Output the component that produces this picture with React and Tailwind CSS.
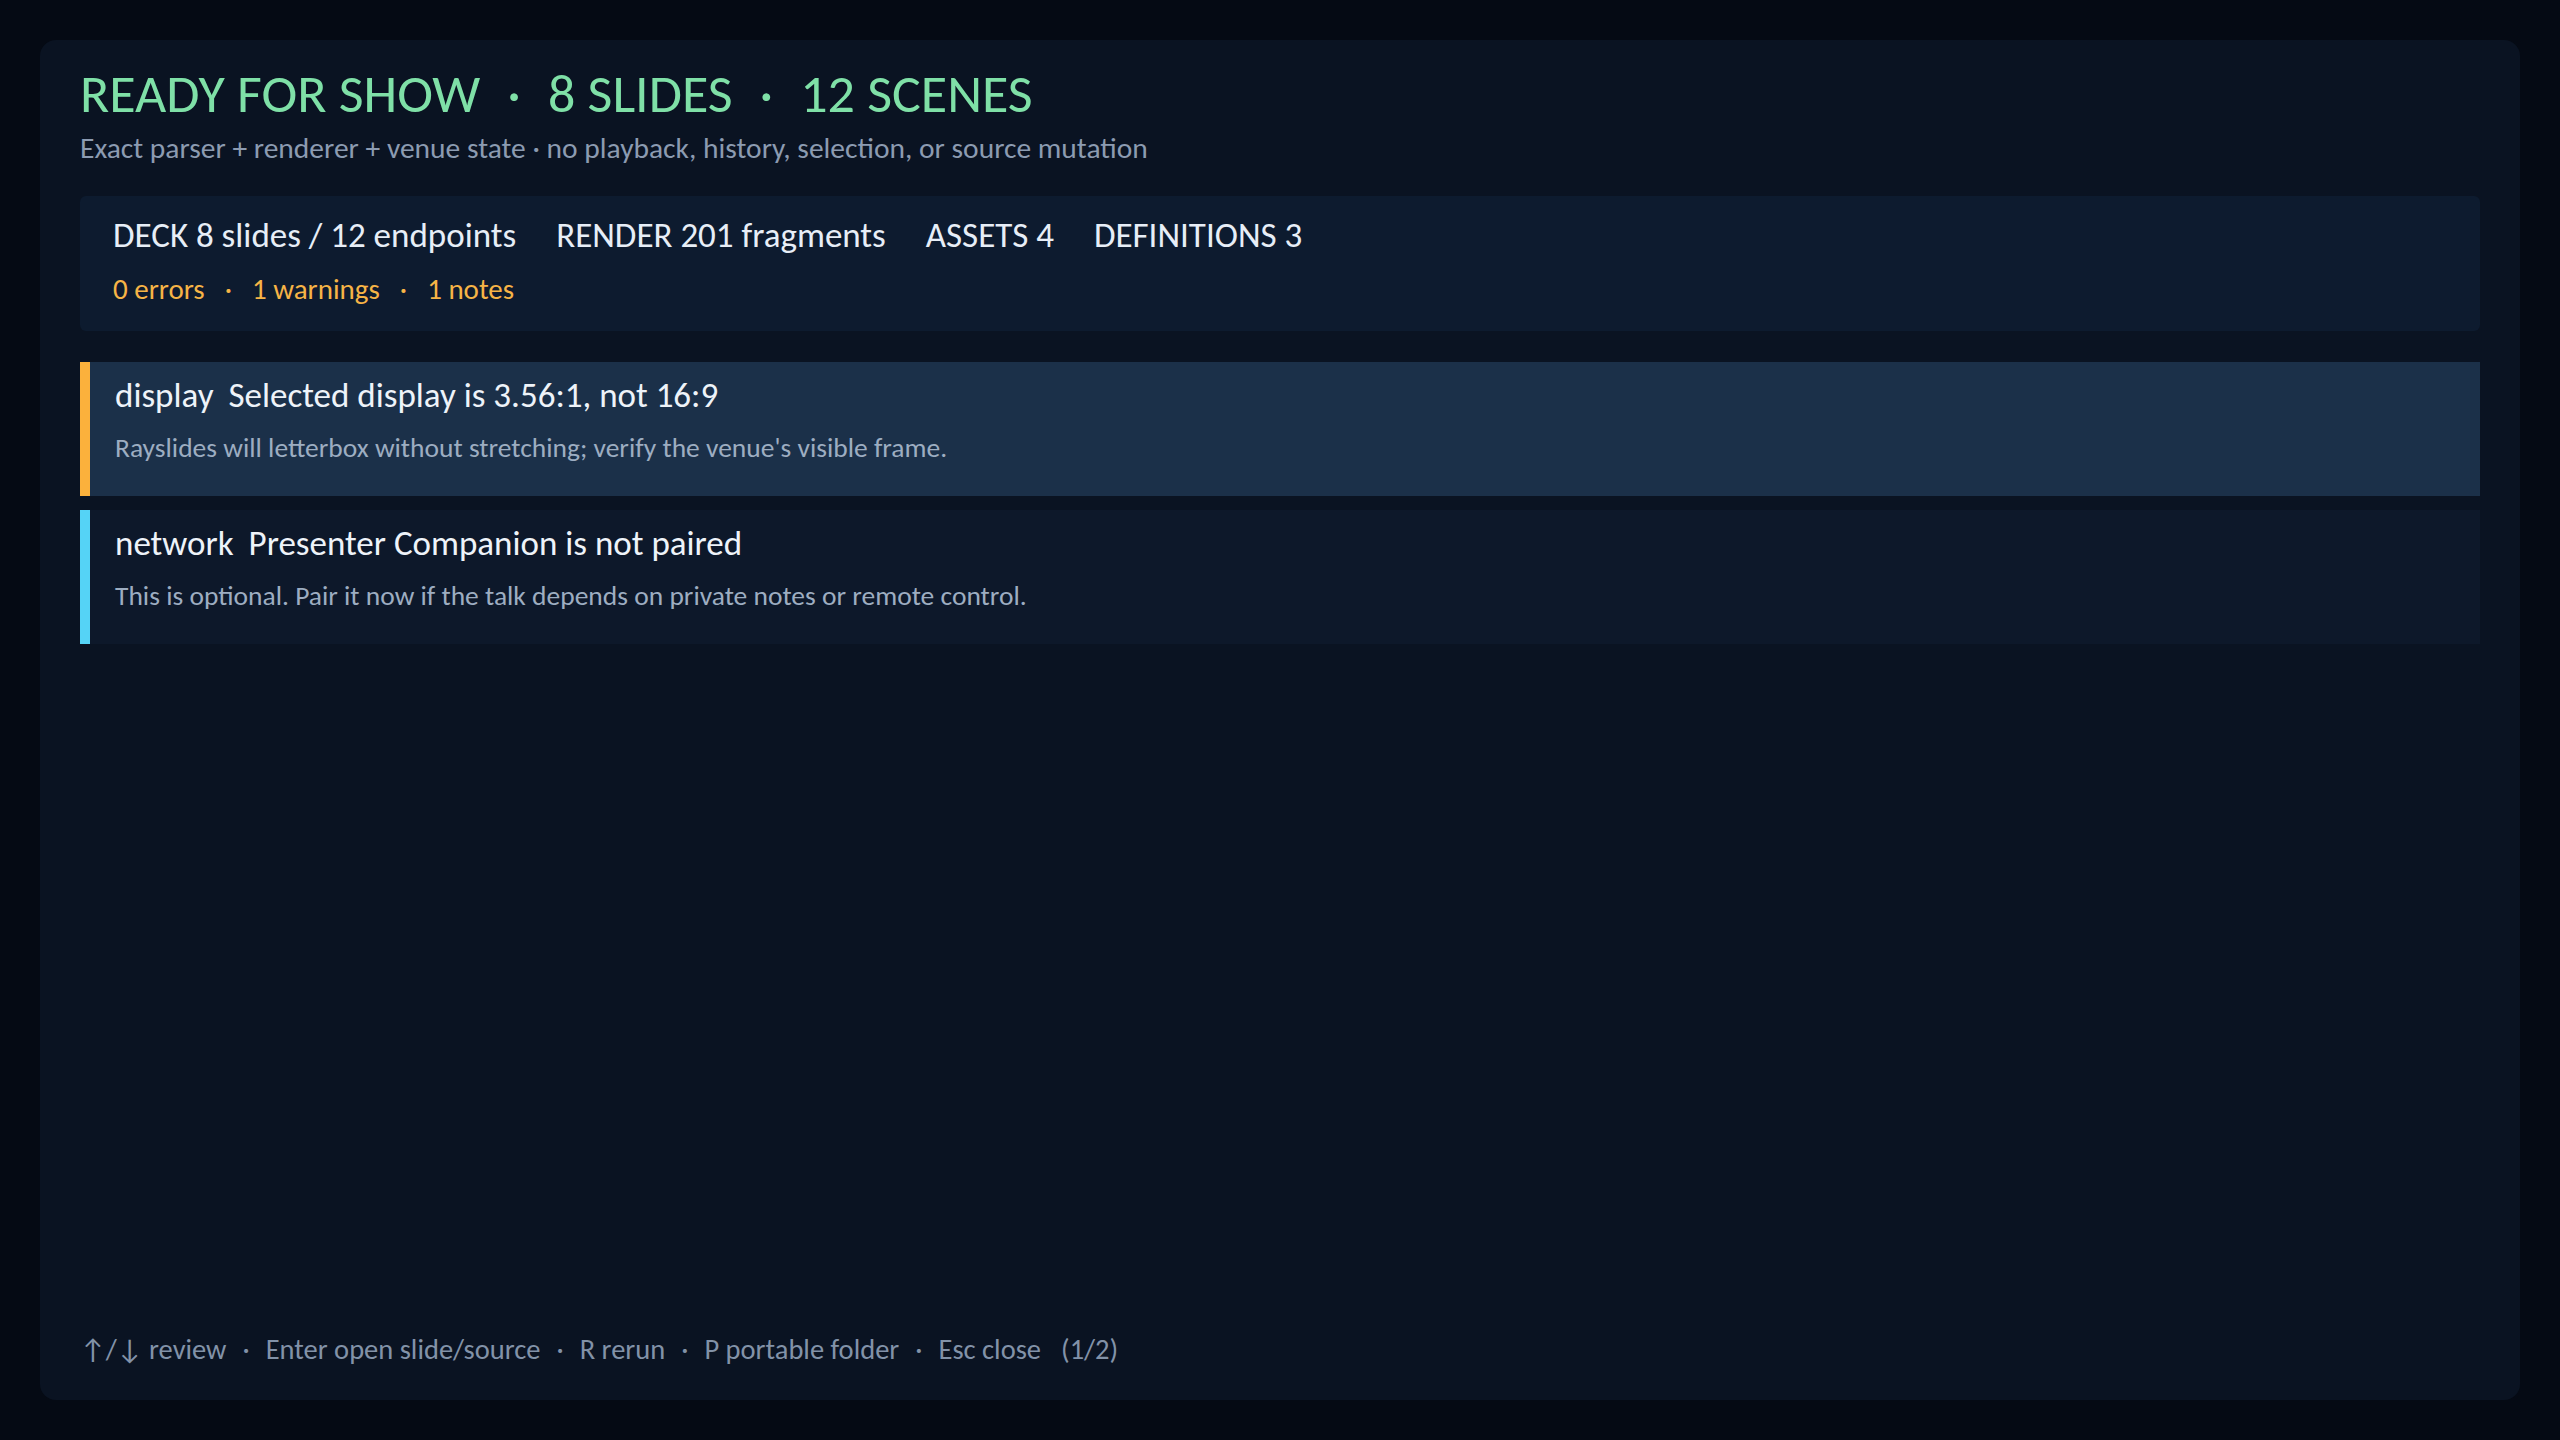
import React from "react";

const issues = [
  {
    key: "display",
    tag: "display",
    title: "Selected display is 3.56:1, not 16:9",
    detail: "Rayslides will letterbox without stretching; verify the venue's visible frame.",
    bar: "bg-[#fbb13c]",
    bg: "bg-[#1b3049]",
  },
  {
    key: "network",
    tag: "network",
    title: "Presenter Companion is not paired",
    detail: "This is optional. Pair it now if the talk depends on private notes or remote control.",
    bar: "bg-[#55d3f6]",
    bg: "bg-[#0d182a]",
  },
];

const Dot = ({ className }) => <span className={className}>·</span>;

const App = () => {
  return (
    <div
      className="w-full h-screen bg-[#050a14] p-[40px] flex"
      style={{ fontFamily: "Carlito, Calibri, Lato, sans-serif" }}
    >
      <div className="flex-1 flex flex-col bg-[#0a1322] rounded-[16px] px-[40px] pt-[22px] pb-[32px]">
        {/* Header */}
        <h1 className="text-[54px] leading-[64px] text-[#7fe0a7] font-normal">
          READY FOR SHOW
          <Dot className="mx-[27px]" />8 SLIDES
          <Dot className="mx-[27px]" />12 SCENES
        </h1>
        <p className="text-[29.5px] leading-[34px] text-[#8c9bb1] mt-[5px]">
          Exact parser + renderer + venue state · no playback, history, selection, or source mutation
        </p>

        {/* Summary */}
        <div className="mt-[31px] bg-[#0d1b2f] rounded-[6px] px-[33px] pt-[16px] pb-[24px]">
          <div className="flex gap-[40px] text-[35px] leading-[46px] text-[#e7eef7]">
            <span>DECK 8 slides / 12 endpoints</span>
            <span>RENDER 201 fragments</span>
            <span>ASSETS 4</span>
            <span>DEFINITIONS 3</span>
          </div>
          <div className="text-[29px] leading-[36px] text-[#f6b446] mt-[13px]">
            0 errors
            <Dot className="mx-[20px]" />1 warnings
            <Dot className="mx-[20px]" />1 notes
          </div>
        </div>

        {/* Issues */}
        <div className="mt-[31px] flex flex-col gap-[14px]">
          {issues.map((issue) => (
            <div key={issue.key} className={`flex h-[134px] ${issue.bg}`}>
              <div className={`w-[10px] shrink-0 ${issue.bar}`} />
              <div className="pl-[25px] pt-[11px]">
                <div className="text-[35px] leading-[44px] text-[#eef3f9]">
                  <span className="mr-[15px]">{issue.tag}</span>
                  {issue.title}
                </div>
                <div className="text-[27.5px] leading-[34px] text-[#9dadc1] mt-[14px]">
                  {issue.detail}
                </div>
              </div>
            </div>
          ))}
        </div>

        {/* Footer */}
        <div className="mt-auto text-[28.5px] leading-[36px] text-[#8292a8]">
          ↑/↓ review
          <Dot className="mx-[16px]" />Enter open slide/source
          <Dot className="mx-[16px]" />R rerun
          <Dot className="mx-[16px]" />P portable folder
          <Dot className="mx-[16px]" />Esc close
          <span className="ml-[20px]">(1/2)</span>
        </div>
      </div>
    </div>
  );
};

export default App;
